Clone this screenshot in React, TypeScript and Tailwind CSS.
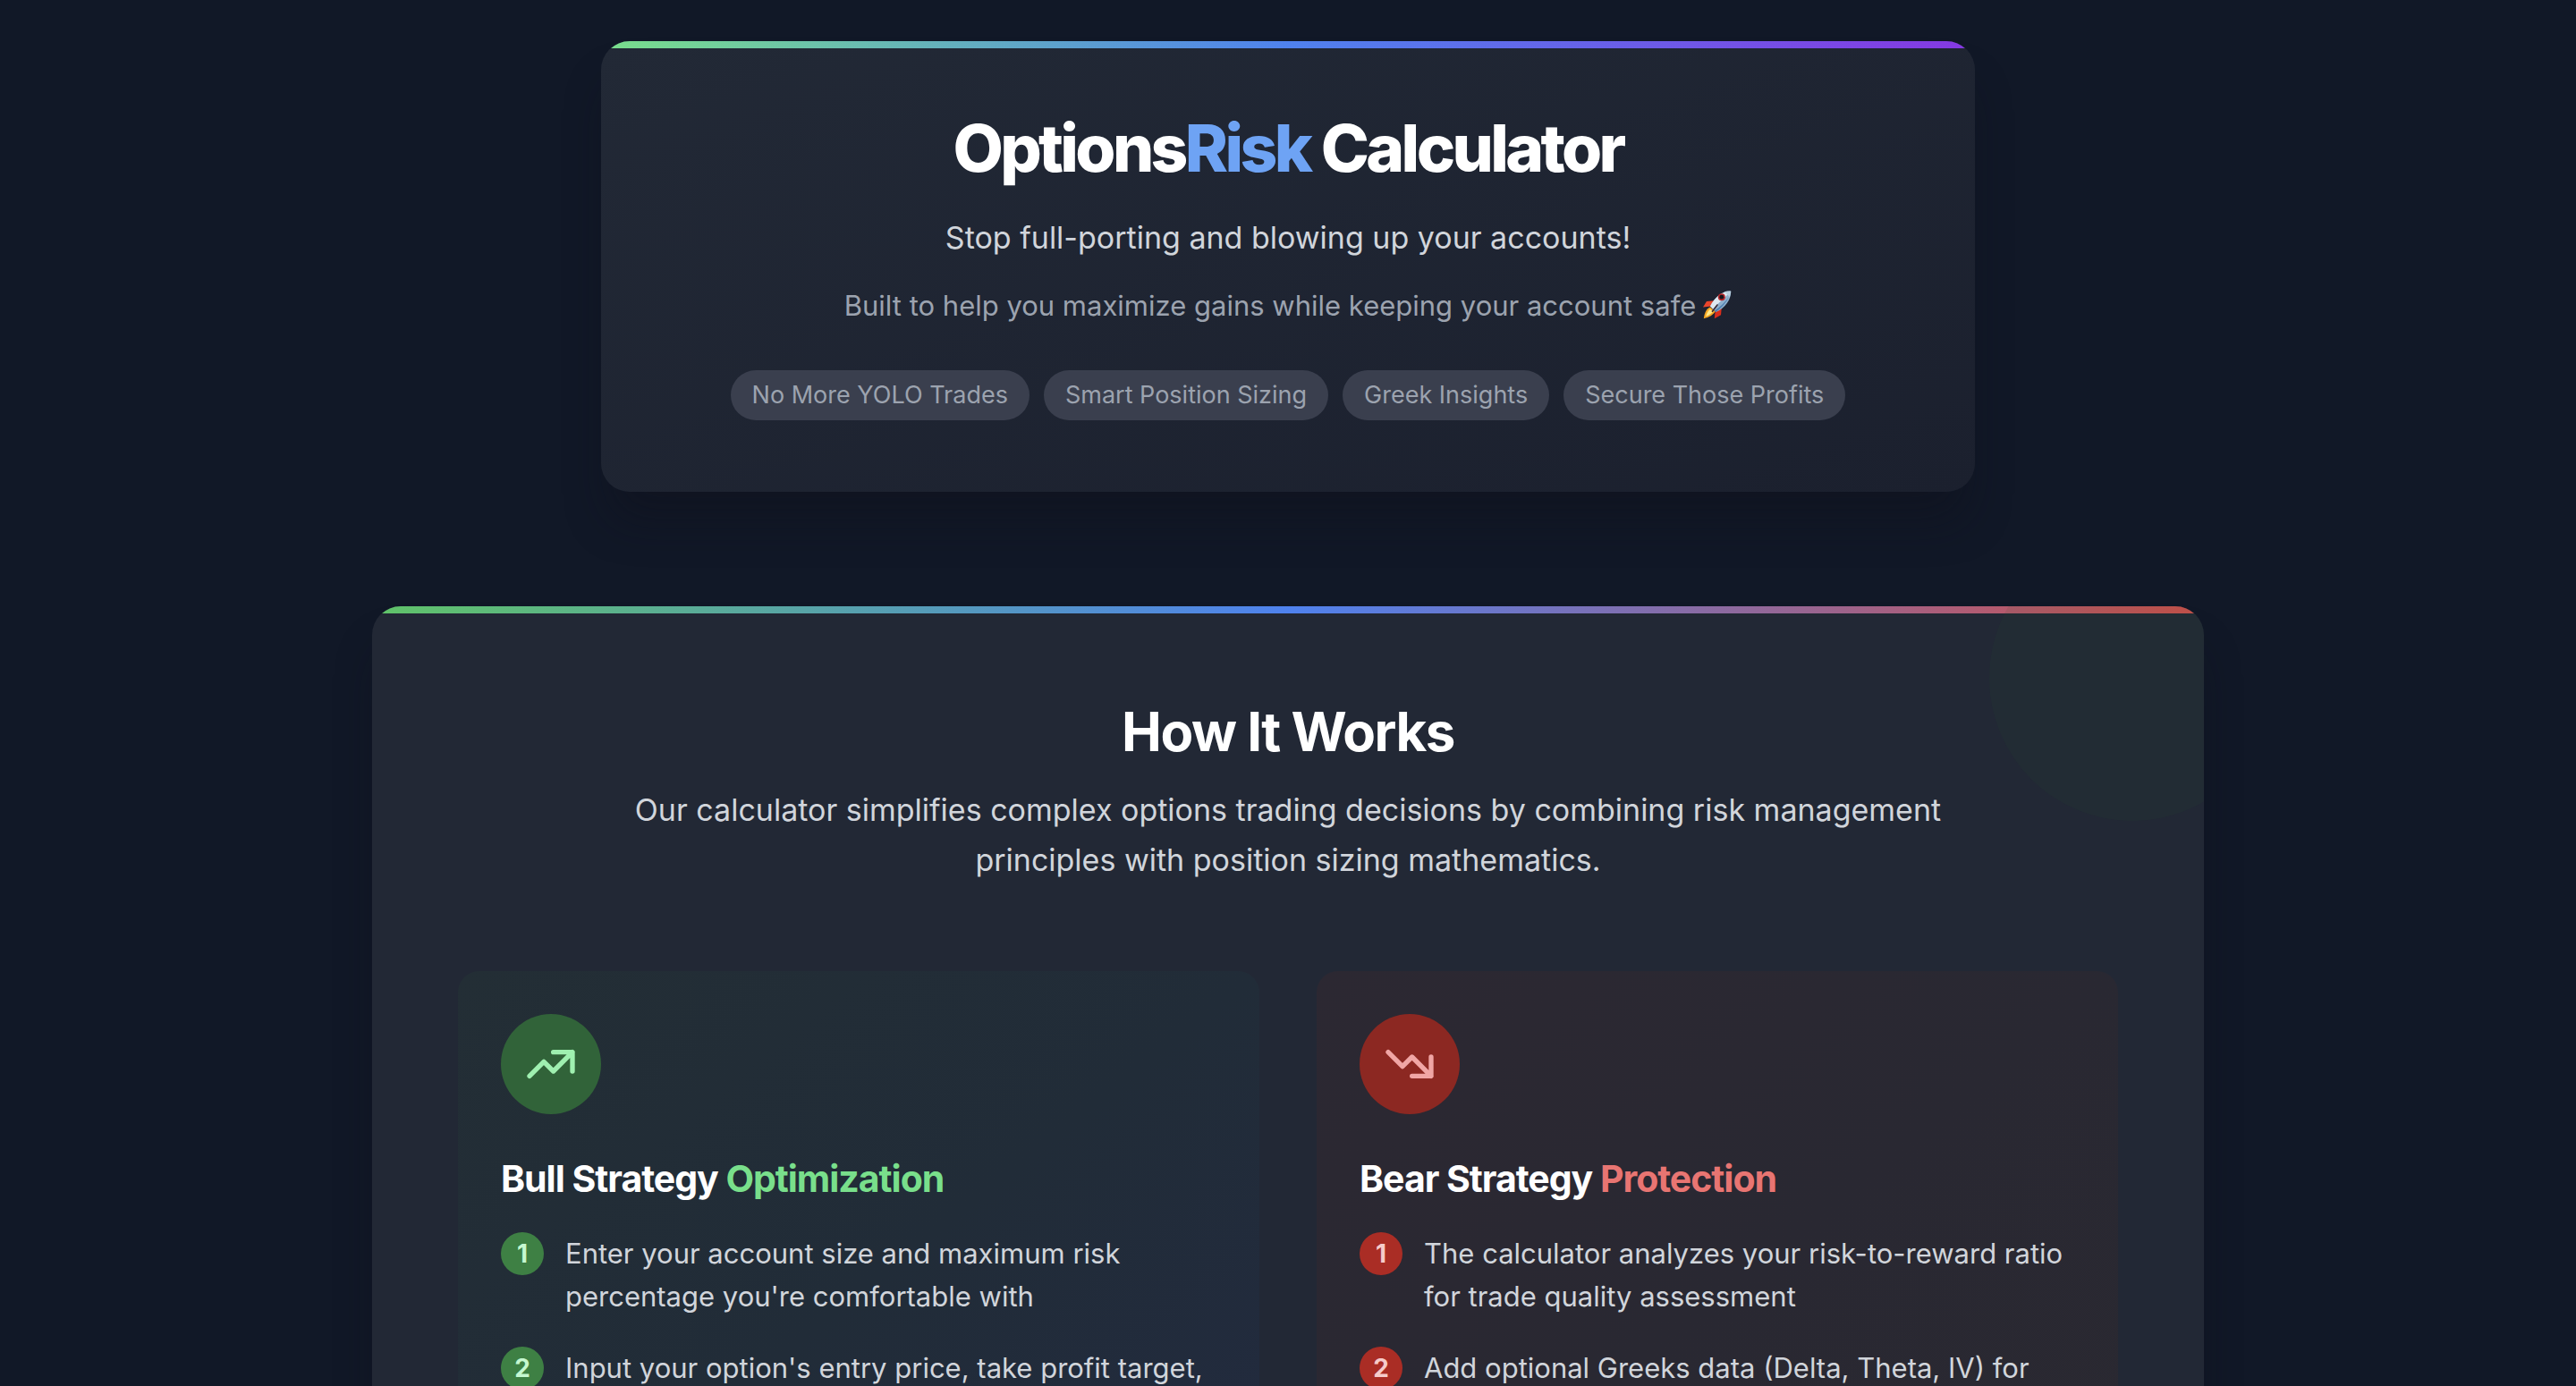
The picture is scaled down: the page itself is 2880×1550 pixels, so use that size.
const pills = ["No More YOLO Trades", "Smart Position Sizing", "Greek Insights", "Secure Those Profits"];

function Rocket() {
  return (
    <svg role="img" aria-label="rocket" viewBox="0 0 40 40" className="ml-2 inline-block size-8 align-[-4px]">
      <path d="M16 14 L5 15 L0 23 L11 22 Z" fill="#e8452c" />
      <path d="M26 24 L25 34 L16 39 L17 29 Z" fill="#d92e1c" />
      <path d="M10 23 C5 25 2 31 1 39 C9 37 14 34 17 29 Z" fill="#f5a623" />
      <path d="M10 26 C7 28 5 32 4 36 C9 34 12 32 14 29 Z" fill="#ffe98a" />
      <path d="M39 1 C28 0 17 8 10 22 L18 30 C32 24 39 12 39 1 Z" fill="#8fb0cc" />
      <path d="M39 1 C28 0 17 8 10 22 L14 26 C20 19 30 10 39 1 Z" fill="#dfe9f1" />
      <path d="M36 9 C32 17 26 24 18 30 L16 28 C24 23 30 17 36 9 Z" fill="#4e7fb0" />
      <path d="M39 1 C35 0 32 1 29 2 C33 4 36 7 37 10 C38 7 39 4 39 1 Z" fill="#b9cfe0" />
      <ellipse cx="26" cy="9" rx="5" ry="5" fill="#b3262a" />
      <circle cx="26" cy="9" r="3" fill="#14161d" />
      <path d="M20 20 L13 29" stroke="#3b2a35" strokeWidth="2" strokeLinecap="round" />
    </svg>
  );
}

type StrategyProps = {
  title: string;
  accent: string;
  accentClass: string;
  cardClass: string;
  iconClass: string;
  badgeClass: string;
  iconPath: string;
  steps: string[];
};

function Strategy({ title, accent, accentClass, cardClass, iconClass, badgeClass, iconPath, steps }: StrategyProps) {
  return (
    <article className={`min-h-[720px] rounded-3xl bg-linear-to-br p-12 ${cardClass}`}>
      <div className={`mb-11 flex size-28 items-center justify-center rounded-full ${iconClass}`}>
        <svg viewBox="0 0 24 24" fill="none" stroke="currentColor" strokeWidth={2} strokeLinecap="round" strokeLinejoin="round" className="size-16" aria-hidden="true">
          <path d={iconPath} />
        </svg>
      </div>
      <h3 className="mb-8 text-[41px] leading-14 font-bold tracking-tight text-white">
        {title} <span className={accentClass}>{accent}</span>
      </h3>
      <ol className="flex flex-col gap-8">
        {steps.map((step, i) => (
          <li key={step} className="flex gap-6">
            <span className={`flex size-12 shrink-0 items-center justify-center rounded-full text-[28px] leading-10 font-bold ${badgeClass}`}>
              {i + 1}
            </span>
            <span className="text-[31px] leading-12 text-[#d1d5db]">{step}</span>
          </li>
        ))}
      </ol>
    </article>
  );
}

export default function App() {
  return (
    <main className="h-screen overflow-hidden bg-[#111827] px-8 pt-[46px] font-[Inter,sans-serif]">
      <header className="mx-auto mb-32 max-w-[1536px] overflow-hidden rounded-[32px] bg-linear-to-br from-[#222936] to-[#1b202e] shadow-[0_40px_50px_-10px_rgba(15,15,25,0.4)]">
        <div className="h-2 bg-linear-to-r/srgb from-[#79df8b] via-[#4f82ee] to-[#8638e2]" />
        <div className="px-20 pt-18 pb-20 text-center">
          <h1 className="mb-8 text-[73px] leading-20 font-extrabold tracking-tighter text-white">
            Options<span className="text-[#6ea3f4]">Risk</span> Calculator
          </h1>
          <p className="mb-6 text-[34px] leading-14 text-[#d1d5db]">Stop full-porting and blowing up your accounts!</p>
          <p className="mb-12 text-[31px] leading-12 text-[#9ca3af]">
            Built to help you maximize gains while keeping your account safe
            <Rocket />
          </p>
          <ul className="flex flex-wrap justify-center gap-4">
            {pills.map((pill) => (
              <li key={pill} className="rounded-full bg-[#3a3f4e] px-6 py-2 text-[27px] leading-10 text-[#9ca3af]">
                {pill}
              </li>
            ))}
          </ul>
        </div>
      </header>

      <section className="relative mx-auto max-w-[2048px] overflow-hidden rounded-[32px] bg-[#222835] shadow-[0_40px_50px_-10px_rgba(15,15,25,0.4)]">
        <div className="h-2 bg-linear-to-r/srgb from-[#60c368] via-[#4f82ee] to-[#d14f4a]" />
        <div className="absolute -top-20 -right-20 size-80 rounded-full bg-[#2c5a35]/10" />
        <div className="p-24">
          <div className="mx-auto mb-24 max-w-[1536px] text-center">
            <h2 className="mb-6 text-[60px] leading-18 font-bold tracking-tight text-white">How It Works</h2>
            <p className="text-[34px] leading-14 text-[#d1d5db]">
              Our calculator simplifies complex options trading decisions by combining risk management principles with
              position sizing mathematics.
            </p>
          </div>
          <div className="grid grid-cols-2 gap-16">
            <Strategy
              title="Bull Strategy"
              accent="Optimization"
              accentClass="text-[#79df8b]"
              cardClass="from-[#232e35] via-[#212c38] to-[#222a40]"
              iconClass="bg-[#316339] text-[#9ff0b0]"
              badgeClass="bg-[#3e8044] text-[#c5f7d0]"
              iconPath="M13 7h8m0 0v8m0-8l-8 8-4-4-6 6"
              steps={[
                "Enter your account size and maximum risk percentage you're comfortable with",
                "Input your option's entry price, take profit target,",
              ]}
            />
            <Strategy
              title="Bear Strategy"
              accent="Protection"
              accentClass="text-[#e87572]"
              cardClass="from-[#2c2832] via-[#292832] to-[#2a2931]"
              iconClass="bg-[#8c2822] text-[#f0a6a5]"
              badgeClass="bg-[#aa2d25] text-[#f6cbca]"
              iconPath="M13 17h8m0 0V9m0 8l-8-8-4 4-6-6"
              steps={[
                "The calculator analyzes your risk-to-reward ratio for trade quality assessment",
                "Add optional Greeks data (Delta, Theta, IV) for",
              ]}
            />
          </div>
        </div>
      </section>
    </main>
  );
}
